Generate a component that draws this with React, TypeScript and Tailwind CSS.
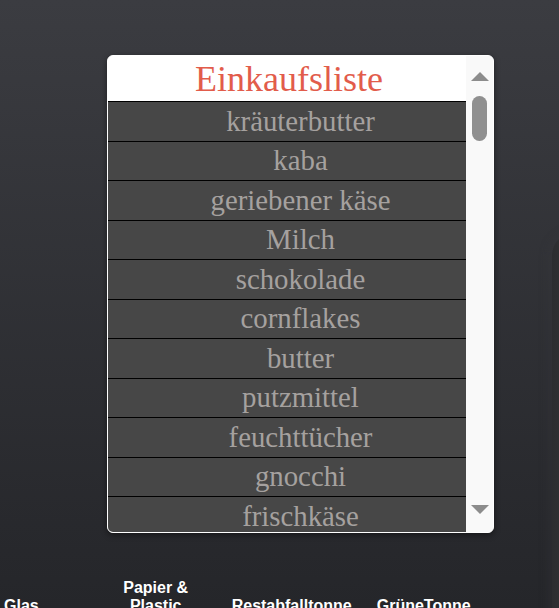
const items = [
  "kräuterbutter",
  "kaba",
  "geriebener käse",
  "Milch",
  "schokolade",
  "cornflakes",
  "butter",
  "putzmittel",
  "feuchttücher",
  "gnocchi",
  "frischkäse",
]

function ScrollTrack() {
  return (
    <div className="flex w-[27px] flex-col items-center bg-[#f9f9f9] pt-[16px] pb-[18px]">
      <svg width="18" height="9" viewBox="0 0 18 9">
        <polygon points="9,0 18,9 0,9" fill="#8c8c8c" />
      </svg>
      <div className="mt-[15px] h-[45px] w-[15px] rounded-full bg-[#8f8f8f]" />
      <div className="flex-1" />
      <svg width="18" height="9" viewBox="0 0 18 9">
        <polygon points="0,0 18,0 9,9" fill="#8c8c8c" />
      </svg>
    </div>
  )
}

function ShoppingList() {
  return (
    <div className="ml-[107px] flex h-[478px] w-[387px] overflow-hidden rounded-[6px] border border-white bg-white shadow-[0_2px_6px_rgba(0,0,0,0.45)]">
      <div className="flex w-[358px] flex-col overflow-hidden">
        <div className="flex h-[46px] shrink-0 items-center justify-center border-b border-black bg-white pl-[4px] text-[36px] leading-none text-[#e25c4b] [font-family:'Liberation_Serif',serif]">
          Einkaufsliste
        </div>
        {items.map((item) => (
          <div
            key={item}
            className="flex h-[39.5px] shrink-0 items-center justify-center border-b border-black bg-[#474747] pl-[27px] text-[28.8px] leading-none text-[#a5a19f] [font-family:'Liberation_Serif',serif]"
          >
            {item}
          </div>
        ))}
      </div>
      <ScrollTrack />
    </div>
  )
}

function BinLabels() {
  return (
    <div className="mt-[46px] flex items-end text-[16px] font-bold leading-[18.4px] text-white [font-family:'Liberation_Sans',Arial,sans-serif]">
      <div className="ml-[4px]">Glas</div>
      <div className="ml-[83px] w-[68px] text-center">Papier &amp; Plastic</div>
      <div className="ml-[42px]">Restabfalltonne</div>
      <div className="ml-[25px]">GrüneTonne</div>
    </div>
  )
}

export default function App() {
  return (
    <div className="relative h-[608px] w-full overflow-hidden bg-gradient-to-b from-[#3b3c41] to-[#25262a] pt-[55px]">
      <ShoppingList />
      <BinLabels />
      <div className="absolute top-[232px] left-[552px] h-[400px] w-[40px] rounded-tl-[24px] bg-gradient-to-r from-[#2c2d30] to-[#3a3a3b] shadow-[-4px_0_10px_rgba(60,60,62,0.25)]" />
    </div>
  )
}
